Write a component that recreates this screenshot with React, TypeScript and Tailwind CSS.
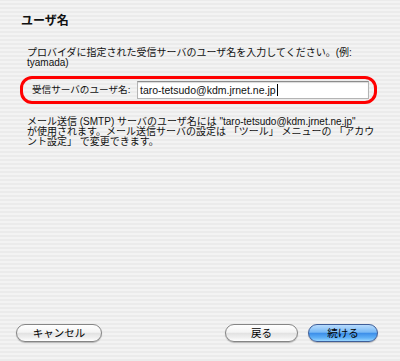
import React from "react";

const font = "font-['Liberation_Sans','Noto_Sans_CJK_JP',sans-serif]";

function AquaButton({ label, width, primary }: { label: string; width: string; primary?: boolean }) {
  return (
    <div
      className={`${width} h-[18px] rounded-full border flex items-center justify-center text-[10.5px] leading-none text-black shadow-[0_1px_1px_rgba(0,0,0,0.25)] ${
        primary
          ? "border-[#3f5e98] bg-[linear-gradient(#b7dbfd_0%,#79b9f5_45%,#3d8fe9_52%,#5fb0f7_80%,#9ad6ff_100%)]"
          : "border-[#858585] bg-[linear-gradient(#ffffff_0%,#f4f4f4_45%,#e2e2e2_52%,#f0f0f0_80%,#ffffff_100%)]"
      }`}
    >
      {label}
    </div>
  );
}

export default function App() {
  return (
    <div
      className={`${font} w-[400px] h-[361px] flex flex-col text-[#111] bg-[repeating-linear-gradient(0deg,#ebebeb_0px,#ebebeb_2px,#f3f3f3_2px,#f3f3f3_4px)]`}
    >
      <div className="pl-[21px] pt-[13px] text-[12px] leading-[16px] font-bold">ユーザ名</div>

      <div className="pl-[27px] mt-[19px] text-[10px] leading-[10px]">
        <div className="whitespace-nowrap">プロバイダに指定された受信サーバのユーザ名を入力してください。(例:</div>
        <div className="whitespace-nowrap">tyamada)</div>
      </div>

      <div className="ml-[20px] mt-[8px] w-[357px] h-[28px] rounded-[12px] border-[3px] border-[#ff0000] flex items-center pl-[9px] pr-[5px]">
        <div className="shrink-0 text-[9.6px] leading-none whitespace-nowrap w-[105px]">受信サーバのユーザ名:</div>
        <div className="flex-1 h-[18px] bg-white border border-[#b4b4b4] border-t-[#8c8c8c] shadow-[inset_0_1px_1px_rgba(0,0,0,0.15)] flex items-center pl-[2px] text-[10.5px] leading-none">
          <span>taro-tetsudo@kdm.jrnet.ne.jp</span>
          <span className="w-px h-[12px] bg-black ml-px" />
        </div>
      </div>

      <div className="pl-[27px] mt-[13px] text-[10px] leading-[10px]">
        <div className="whitespace-nowrap">メール送信 (SMTP) サーバのユーザ名には "taro-tetsudo@kdm.jrnet.ne.jp"</div>
        <div className="whitespace-nowrap">が使用されます。メール送信サーバの設定は 「ツール」 メニューの 「アカウ</div>
        <div className="whitespace-nowrap">ント設定」 で変更できます。</div>
      </div>

      <div className="flex-1" />

      <div className="flex items-center pl-[16px] pr-[22px] pb-[19px]">
        <AquaButton label="キャンセル" width="w-[86px]" />
        <div className="flex-1" />
        <AquaButton label="戻る" width="w-[73px]" />
        <div className="w-[10px]" />
        <AquaButton label="続ける" width="w-[70px]" primary />
      </div>
    </div>
  );
}
